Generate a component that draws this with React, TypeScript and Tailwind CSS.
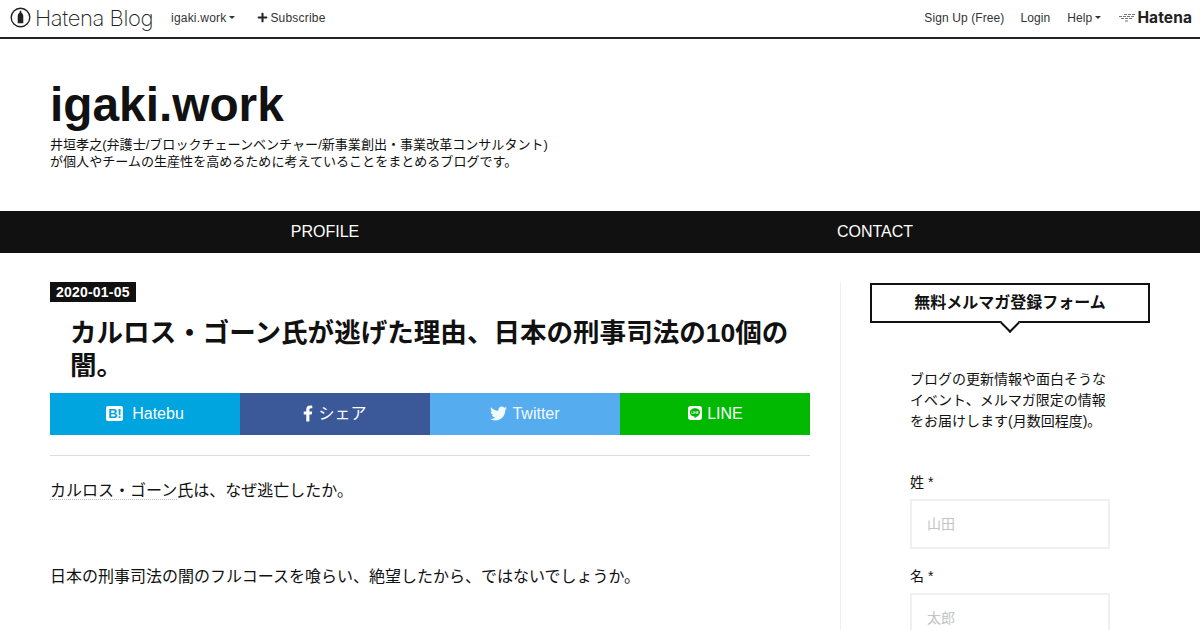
import { FaFacebookF, FaTwitter, FaPlus, FaLine } from "react-icons/fa"

const Caret = () => (
  <span className="ml-[3px] inline-block h-0 w-0 border-x-[3px] border-t-[3px] border-x-transparent border-t-[#333]" />
)

function ToolBar() {
  return (
    <div className="flex h-[39px] items-center justify-between border-b-2 border-[#222] bg-white pb-[2px] text-[12px] text-[#333]">
      <div className="flex items-center tracking-[0.2px]">
        <div className="ml-[10px] flex items-center">
          <svg width="21" height="21" viewBox="0 0 21 21">
            <circle cx="10.5" cy="10.5" r="9.3" fill="none" stroke="#222" strokeWidth="1.4" />
            <path d="M9.7 3.8 H11.3 V5.6 C12.6 6.6 13.3 7.8 13.3 9.2 V16.2 H7.7 V9.2 C7.7 7.8 8.4 6.6 9.7 5.6 Z" fill="#222" />
          </svg>
          <span className="ml-[4px] font-['Inter'] text-[22px] leading-none font-extralight tracking-[-0.4px] text-[#222]">Hatena Blog</span>
        </div>
        <span className="ml-[18px] flex items-center">igaki.work<Caret /></span>
        <span className="ml-[22px] flex items-center"><FaPlus className="mr-[2px] text-[11px] text-[#222]" />Subscribe</span>
      </div>
      <div className="mr-[8px] flex items-center tracking-[0.1px]">
        <span>Sign Up (Free)</span>
        <span className="ml-[16px]">Login</span>
        <span className="ml-[17px] flex items-center">Help<Caret /></span>
        <svg className="mr-[1px] ml-[17px]" width="18" height="11" viewBox="0 0 18 11" stroke="#777" strokeWidth="1" strokeDasharray="3 1" fill="none">
          <path d="M6 2.5 H17 M1 4.5 H17 M3 6.5 H14 M7 9 H11" />
        </svg>
        <span className="font-['Inter'] text-[15.5px] leading-none font-bold text-[#222]">Hatena</span>
      </div>
    </div>
  )
}

function Header() {
  return (
    <header className="h-[172px] px-[50px] pt-[37px]">
      <h1 className="text-[47.8px] leading-[58px] font-bold text-[#111]">igaki.work</h1>
      <p className="mt-[2px] text-[13.05px] leading-[17px] text-[#111]">
        井垣孝之(弁護士/ブロックチェーンベンチャー/新事業創出・事業改革コンサルタント)
        <br />
        が個人やチームの生産性を高めるために考えていることをまとめるブログです。
      </p>
    </header>
  )
}

function Nav() {
  return (
    <nav className="flex h-[42px] items-center bg-[#111] text-[16px] text-white">
      <div className="w-[650px] text-center">PROFILE</div>
      <div className="w-[450px] text-center">CONTACT</div>
    </nav>
  )
}

function ShareButtons() {
  return (
    <div className="grid h-[42px] grid-cols-4 text-[16px] text-white">
      <div className="flex items-center justify-center bg-[#00a4de]">
        <span className="mr-[9px] -mt-[2px] flex h-[15px] w-[17px] items-center justify-center rounded-[2px] bg-white text-[13px] leading-none font-bold tracking-[-0.5px] text-[#00a4de]">B!</span>
        Hatebu
      </div>
      <div className="flex items-center justify-center bg-[#3b5998]">
        <FaFacebookF className="mr-[5px] -mt-[2px] h-[17px] w-[10px]" />シェア
      </div>
      <div className="flex items-center justify-center bg-[#55acee] text-[#f2f9ff]">
        <FaTwitter className="mr-[5px] -mt-[2px] h-[17px] w-[17px]" />Twitter
      </div>
      <div className="flex items-center justify-center bg-[#00b900]">
        <FaLine className="mr-[4px] -mt-[2px] h-[16px] w-[16px]" />LINE
      </div>
    </div>
  )
}

function Entry() {
  return (
    <main className="w-[760px]">
      <div className="w-fit bg-[#111] px-[6px] text-[14px] leading-[20px] font-bold tracking-[0.2px] text-white">2020-01-05</div>
      <h2 className="mt-[15px] pl-[20px] text-[26.55px] leading-[33px] font-bold text-[#111]">
        カルロス・ゴーン氏が逃げた理由、日本の刑事司法の10個の闇。
      </h2>
      <div className="mt-[10px]">
        <ShareButtons />
      </div>
      <div className="mt-[20px] border-t border-[#ddd] pt-[23px] text-[16px] leading-[24px] text-[#111]">
        <p>
          <span className="border-b border-dotted border-[#bbb]">カルロス・ゴーン</span>氏は、なぜ逃亡したか。
        </p>
        <p className="mt-[62px]">日本の刑事司法の闇のフルコースを喰らい、絶望したから、ではないでしょうか。</p>
      </div>
    </main>
  )
}

function Field({ label, hint }: { label: string; hint: string }) {
  return (
    <div className="mb-[17px]">
      <div className="text-[14px] leading-[20px] text-[#111]">{label}</div>
      <div className="mt-[7px] flex h-[50px] w-[200px] items-center border-2 border-[#f0f0f0] px-[15px] text-[14px] text-[#c4c4c4]">{hint}</div>
    </div>
  )
}

function Sidebar() {
  return (
    <aside className="ml-[30px] w-[310px] border-l border-[#eee] pl-[29px]">
      <div className="relative mt-[1px] flex h-[40px] w-[280px] items-center justify-center border-2 border-[#111] text-[16px] font-bold text-[#111]">
        無料メルマガ登録フォーム
        <span className="absolute -bottom-[9px] left-1/2 h-[14px] w-[14px] -translate-x-1/2 rotate-45 border-r-2 border-b-2 border-[#111] bg-white" />
      </div>
      <div className="px-[40px]">
        <p className="mt-[46px] text-[14px] leading-[21px] text-[#111]">
          ブログの更新情報や面白そうなイベント、メルマガ限定の情報をお届けします(月数回程度)。
        </p>
        <div className="mt-[40px]">
          <Field label="姓 *" hint="山田" />
          <Field label="名 *" hint="太郎" />
        </div>
      </div>
    </aside>
  )
}

export default function App() {
  return (
    <div className="h-[630px] w-[1200px] overflow-hidden bg-white font-['Liberation_Sans','Noto_Sans_CJK_JP',sans-serif]">
      <ToolBar />
      <Header />
      <Nav />
      <div className="flex px-[50px] pt-[29px]">
        <Entry />
        <Sidebar />
      </div>
    </div>
  )
}
